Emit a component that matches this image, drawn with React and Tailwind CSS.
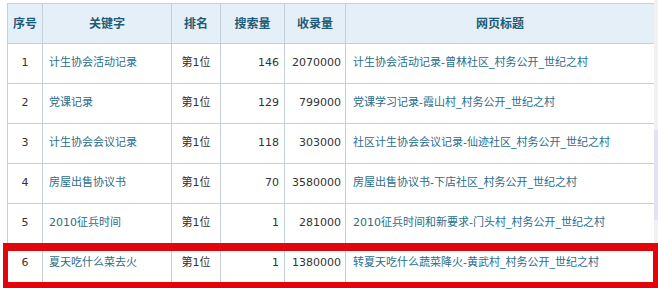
import React from "react";

const rows = [
  { no: 1, kw: "计生协会活动记录", rank: "第1位", search: 146, index: 2070000, title: "计生协会活动记录-曾林社区_村务公开_世纪之村" },
  { no: 2, kw: "党课记录", rank: "第1位", search: 129, index: 799000, title: "党课学习记录-霞山村_村务公开_世纪之村" },
  { no: 3, kw: "计生协会会议记录", rank: "第1位", search: 118, index: 303000, title: "社区计生协会会议记录-仙迹社区_村务公开_世纪之村" },
  { no: 4, kw: "房屋出售协议书", rank: "第1位", search: 70, index: 3580000, title: "房屋出售协议书-下店社区_村务公开_世纪之村" },
  { no: 5, kw: "2010征兵时间", rank: "第1位", search: 1, index: 281000, title: "2010征兵时间和新要求-门头村_村务公开_世纪之村" },
  { no: 6, kw: "夏天吃什么菜去火", rank: "第1位", search: 1, index: 1380000, title: "转夏天吃什么蔬菜降火-黄武村_村务公开_世纪之村" },
];

const headers = ["序号", "关键字", "排名", "搜索量", "收录量", "网页标题"];

export default function App() {
  return (
    <div
      className="relative w-[658px] h-[288px] overflow-hidden bg-white pl-[7px] pt-[3px] text-[11px]"
      style={{ fontFamily: '"DejaVu Sans", "Noto Sans CJK SC", sans-serif' }}
    >
      {/* scrollbar strip at the right edge */}
      <div className="absolute right-0 top-0 h-full w-[4px] bg-[#f1f1f3]">
        <div className="mt-[130px] h-[90px] w-full bg-[#dfe3f3]" />
      </div>

      <table className="table-fixed border-collapse border border-[#c3d0da]">
        <colgroup>
          <col className="w-[35px]" />
          <col className="w-[129px]" />
          <col className="w-[49px]" />
          <col className="w-[64px]" />
          <col className="w-[61px]" />
          <col className="w-[309px]" />
        </colgroup>
        <thead>
          <tr className="h-[40px] bg-[#e5eff8]">
            {headers.map((h) => (
              <th
                key={h}
                className="border border-[#c3d0da] text-center text-[12px] font-bold text-[#1d5c78]"
              >
                {h}
              </th>
            ))}
          </tr>
        </thead>
        <tbody>
          {rows.map((r) => (
            <tr key={r.no} className="h-[40px]">
              <td className="border border-[#c3d0da] text-center text-[#333]">{r.no}</td>
              <td className="border border-[#c3d0da] pl-[6px] text-[#2a6d8b]">{r.kw}</td>
              <td className="border border-[#c3d0da] text-center text-[#333]">{r.rank}</td>
              <td className="border border-[#c3d0da] pr-[5px] text-right text-[#333]">{r.search}</td>
              <td className="border border-[#c3d0da] pr-[4px] text-right text-[#333]">{r.index}</td>
              <td className="border border-[#c3d0da] pl-[7px] text-[#2a6d8b]">{r.title}</td>
            </tr>
          ))}
        </tbody>
      </table>

      {/* red highlight box over row 6 */}
      <div className="absolute left-[3px] top-[243px] h-[45px] w-[655px] border-x-[5px] border-t-[8px] border-b-[6px] border-[#e1060c]" />
    </div>
  );
}
